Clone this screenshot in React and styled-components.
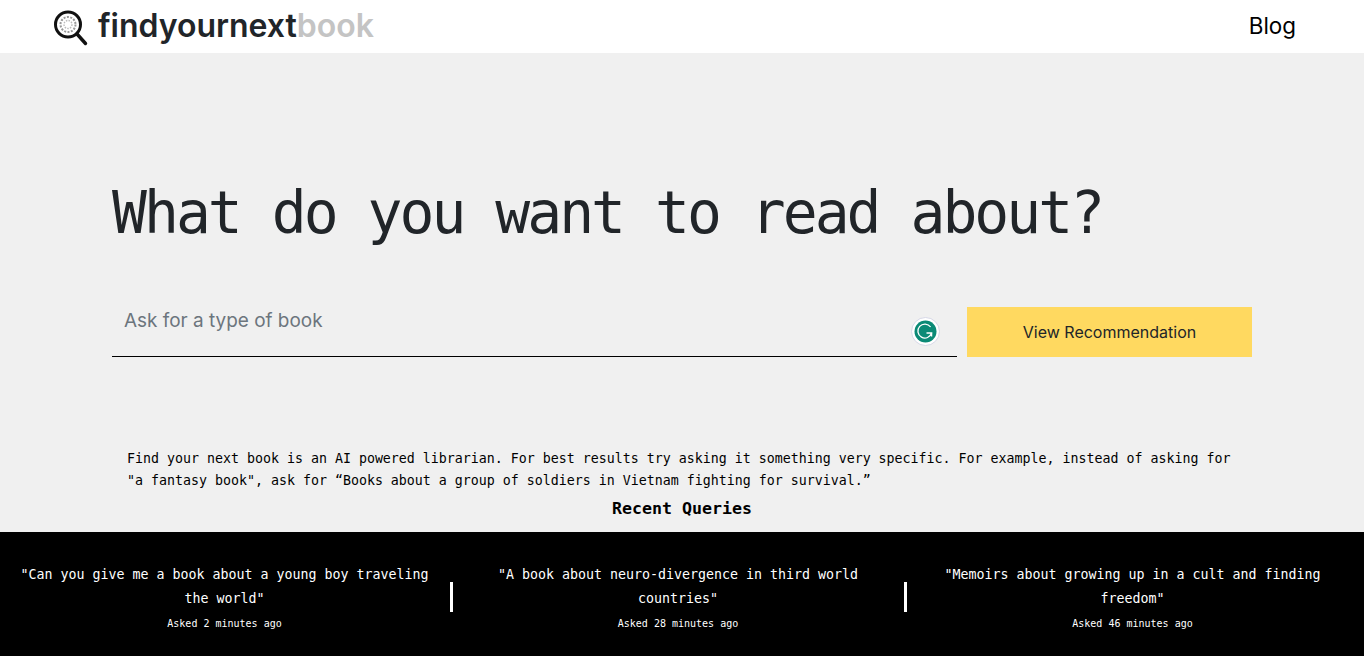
import React from "react";
import styled, { createGlobalStyle } from "styled-components";

const Global = createGlobalStyle`
  * { box-sizing: border-box; }
  html, body { margin: 0; padding: 0; background: #f0f0f0; }
  body { font-family: "Inter", sans-serif; overflow: hidden; }
`;
const MONO = `"DejaVu Sans Mono", "Liberation Mono", monospace`;

const Page = styled.div`
  width: 1364px;
  height: 656px;
  display: flex;
  flex-direction: column;
`;
const Header = styled.header`
  height: 53px;
  background: #fff;
  display: flex;
  align-items: center;
  justify-content: space-between;
  padding: 0 68px 2px 53px;
`;
const Brand = styled.a`
  display: flex;
  align-items: center;
  gap: 10px;
  font-size: 32px;
  font-weight: 600;
  letter-spacing: -0.02px;
  color: #212529;
`;
const BrandMark = styled.svg`
  margin-top: 4px;
`;
const BrandMuted = styled.span`
  color: #c4c4c4;
`;
const NavLink = styled.a`
  font-size: 22.4px;
  color: #000;
`;
const Hero = styled.main`
  flex: 1;
  padding: 128px 112px 0;
  display: flex;
  flex-direction: column;
`;
const Title = styled.h1`
  margin: 0;
  font-family: ${MONO};
  font-weight: 400;
  font-size: 58px;
  letter-spacing: -2.98px;
  line-height: 64px;
  color: #212529;
  white-space: nowrap;
`;
const SearchRow = styled.form`
  display: flex;
  gap: 10px;
  margin-top: 62px;
  width: 1140px;
`;
const InputWrap = styled.div`
  position: relative;
  flex: 1;
`;
const Input = styled.input`
  width: 100%;
  height: 50px;
  padding: 0 12px 22px;
  border: 0;
  border-bottom: 1px solid #000;
  background: transparent;
  font-family: "Inter", sans-serif;
  font-size: 18.95px;
  outline: none;
  &::placeholder { color: #6c757d; opacity: 1; }
`;
const Grammarly = styled.span`
  position: absolute;
  right: 17px;
  top: 10px;
  width: 29px;
  height: 29px;
`;
const Button = styled.button`
  width: 285px;
  height: 50px;
  border: 0;
  background: #ffd960;
  color: #212529;
  font-family: "Inter", sans-serif;
  font-size: 16px;
`;
const Intro = styled.p`
  margin: 91px 0 0;
  padding: 0 15px;
  font-family: ${MONO};
  font-size: 13.29px;
  line-height: 22px;
  color: #000;
`;
const RecentTitle = styled.h2`
  margin: 6px 0 0;
  text-align: center;
  font-family: ${MONO};
  font-size: 16.6px;
  line-height: 22px;
  font-weight: 700;
  color: #000;
`;
const QueryBar = styled.section`
  height: 124px;
  background: #000;
  display: grid;
  grid-template-columns: 453px 454px 457px;
  align-items: start;
`;
const Query = styled.article`
  height: 100%;
  padding: 31px 24px 0 20px;
  text-align: center;
  color: #fff;
  font-family: ${MONO};
  position: relative;
  &:last-child { padding-right: 26px; }
  &:not(:last-child)::after {
    content: "";
    position: absolute;
    right: 0;
    top: 50px;
    width: 3px;
    height: 30px;
    background: #fff;
  }
`;
const QueryText = styled.div`
  font-size: 13.29px;
  line-height: 24px;
`;
const QueryTime = styled.div`
  font-size: 10px;
  line-height: 14px;
  margin-top: 6px;
`;

const LogoIcon = () => (
  <BrandMark width="35" height="36" viewBox="0 0 35 36" fill="none">
    <circle cx="15" cy="14.5" r="12.5" stroke="#111" strokeWidth="3" />
    <circle cx="15" cy="14.5" r="7.5" stroke="#999" strokeWidth="2" strokeDasharray="2 1.4" />
    <circle cx="15" cy="14.5" r="4" stroke="#bbb" strokeWidth="1.4" strokeDasharray="1.5 1.2" />
    <path d="M24 24 L32.5 33.5" stroke="#111" strokeWidth="3.4" strokeLinecap="round" />
  </BrandMark>
);

const GrammarlyIcon = () => (
  <svg width="29" height="29" viewBox="0 0 29 29" fill="none">
    <circle cx="14.5" cy="14.5" r="14" fill="#fff" stroke="#d6d7e6" />
    <circle cx="14.5" cy="14.5" r="11" fill="#0b8a76" />
    <path d="M19.6 10 A7 7 0 1 0 20.6 16 H15.5" stroke="#fff" strokeWidth="1.3" />
    <path d="M20.6 16 V19.5" stroke="#fff" strokeWidth="1.3" />
  </svg>
);

const queries = [
  { text: '"Can you give me a book about a young boy traveling the world"', time: "Asked 2 minutes ago" },
  { text: '"A book about neuro-divergence in third world countries"', time: "Asked 28 minutes ago" },
  { text: '"Memoirs about growing up in a cult and finding freedom"', time: "Asked 46 minutes ago" },
];

export default function App() {
  return (
    <Page>
      <Global />
      <Header>
        <Brand>
          <LogoIcon />
          <span>findyournext<BrandMuted>book</BrandMuted></span>
        </Brand>
        <NavLink>Blog</NavLink>
      </Header>
      <Hero>
        <Title>What do you want to read about?</Title>
        <SearchRow>
          <InputWrap>
            <Input placeholder="Ask for a type of book" />
            <Grammarly><GrammarlyIcon /></Grammarly>
          </InputWrap>
          <Button type="button">View Recommendation</Button>
        </SearchRow>
        <Intro>
          Find your next book is an AI powered librarian. For best results try asking it something very specific. For example, instead of asking for "a fantasy book", ask for “Books about a group of soldiers in Vietnam fighting for survival.”
        </Intro>
        <RecentTitle>Recent Queries</RecentTitle>
      </Hero>
      <QueryBar>
        {queries.map((q) => (
          <Query key={q.time}>
            <QueryText>{q.text}</QueryText>
            <QueryTime>{q.time}</QueryTime>
          </Query>
        ))}
      </QueryBar>
    </Page>
  );
}
